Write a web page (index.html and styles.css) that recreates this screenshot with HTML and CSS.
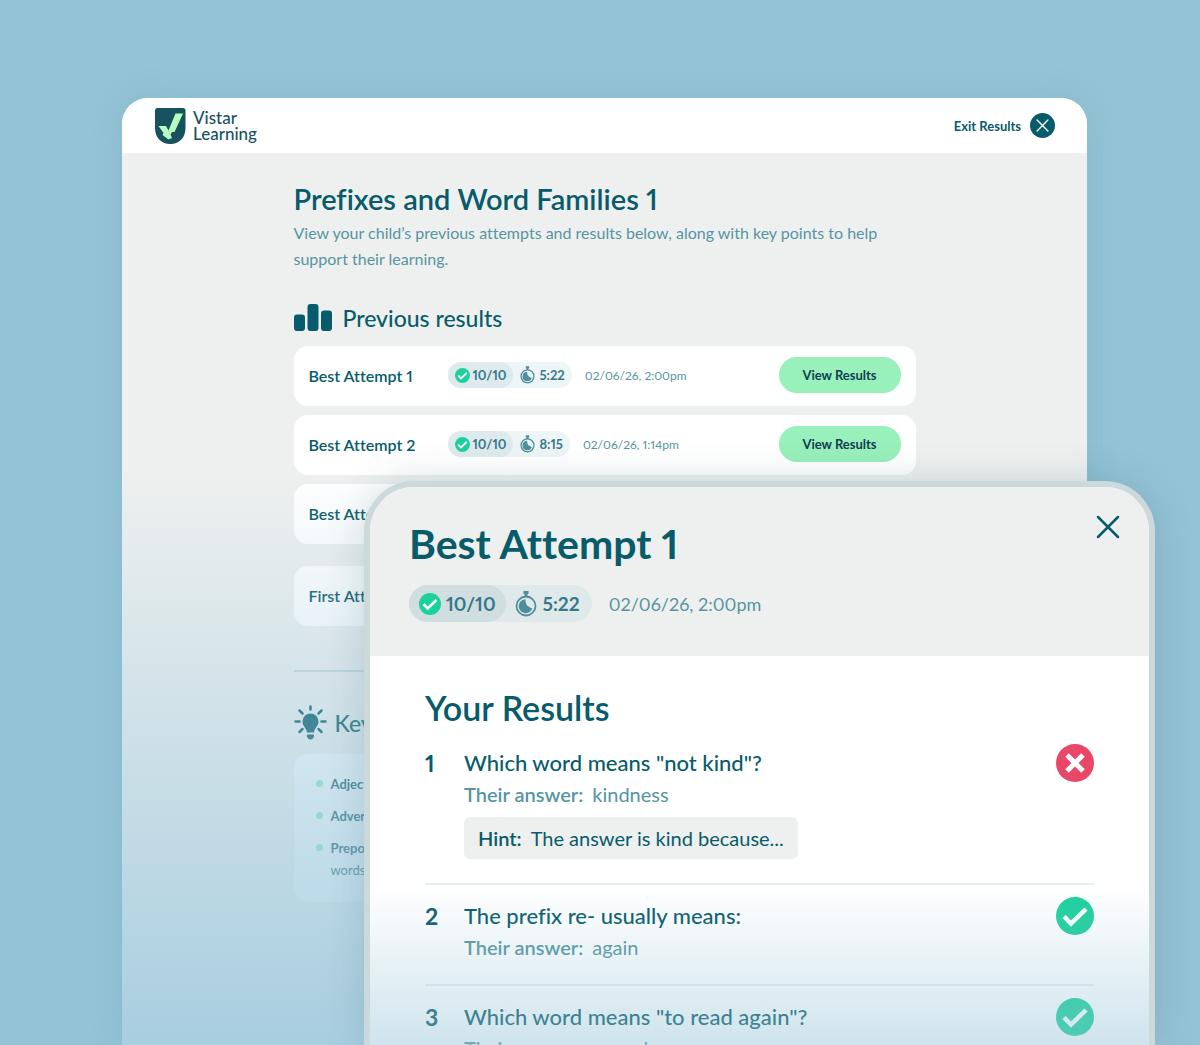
FILE: index.html
```html
<!DOCTYPE html>
<html lang="en">
<head>
  <meta charset="UTF-8">
  <meta name="viewport" content="width=device-width, initial-scale=1.0">
  <title>Vistar Learning - Results</title>
  <link rel="stylesheet" href="styles.css">
</head>
<body>
  <!-- shared icons -->
  <svg class="sprite" aria-hidden="true">
    <symbol id="tick" viewBox="0 0 38 38">
      <circle cx="19" cy="19" r="19" fill="#1dd09d"/>
      <path d="M8 19.500l7 7 15-14.500" fill="none" stroke="#fff" stroke-width="4.500"/>
    </symbol>
    <symbol id="wrong" viewBox="0 0 38 38">
      <circle cx="19" cy="19" r="19" fill="#e84767"/>
      <path d="M11 11l16 16M27 11L11 27" fill="none" stroke="#fff" stroke-width="5"/>
    </symbol>
    <symbol id="timer" viewBox="0 0 22 26">
      <circle cx="11" cy="15" r="9.500" fill="none" stroke="#4f8f9c" stroke-width="1.800"/>
      <path d="M10.500 8.200c0 4.500.5 6.300 6.800 9.300A7 7 0 1 1 10.500 8.200z" fill="#4f8f9c"/>
      <path d="M8.500 1.500h5M11 1.500v4" fill="none" stroke="#4f8f9c" stroke-width="3"/>
    </symbol>
    <symbol id="cross" viewBox="0 0 24 24">
      <path d="M2 2l20 20M22 2L2 22" fill="none" stroke="currentColor" stroke-width="2.500" stroke-linecap="round"/>
    </symbol>
  </svg>

  <div class="window">
    <header class="topbar">
      <a class="logo" href="#">
        <svg class="logo-mark" viewBox="0 0 32 38" aria-hidden="true">
          <path d="M3.500 1h25.500q2.500 0 2.500 2.500V21c0 10-6.500 16-15.250 16S1 31 1 21V3.500Q1 1 3.500 1z" fill="#17525f"/>
          <path d="M4.500 19H12l2.500 4.500L21.500 6.500H29l-8.500 18.500H18l-1.500 2.500 1.500 3.500-3.500 1.500-6-4.500 1-2z" fill="#b9fcc0"/>
        </svg>
        <span class="logo-text">Vistar<br>Learning</span>
      </a>
      <button class="exit" type="button">
        Exit Results
        <span class="exit-icon"><svg viewBox="0 0 24 24"><use href="#cross"/></svg></span>
      </button>
    </header>

    <main class="content">
      <h1>Prefixes and Word Families 1</h1>
      <p class="intro">View your child’s previous attempts and results below, along with key points to help support their learning.</p>

      <h2 class="section-title">
        <svg class="icon-bars" viewBox="0 0 39 28" aria-hidden="true">
          <g fill="#075b6a">
            <rect x="0" y="10.500" width="11" height="16.500" rx="3"/>
            <rect x="13.500" y="0" width="11" height="27" rx="3"/>
            <rect x="27" y="6.500" width="11" height="20.500" rx="3"/>
          </g>
        </svg>
        Previous results
      </h2>

      <ul class="attempts">
        <li class="attempt">
          <span class="attempt-name">Best Attempt 1</span>
          <span class="stats">
            <span class="score"><svg class="stat-tick"><use href="#tick"/></svg>10/10</span>
            <span class="time"><svg class="stat-timer"><use href="#timer"/></svg>5:22</span>
          </span>
          <span class="date">02/06/26, 2:00pm</span>
          <button class="view" type="button">View Results</button>
        </li>
        <li class="attempt">
          <span class="attempt-name">Best Attempt 2</span>
          <span class="stats">
            <span class="score"><svg class="stat-tick"><use href="#tick"/></svg>10/10</span>
            <span class="time"><svg class="stat-timer"><use href="#timer"/></svg>8:15</span>
          </span>
          <span class="date">02/06/26, 1:14pm</span>
          <button class="view" type="button">View Results</button>
        </li>
        <li class="attempt">
          <span class="attempt-name">Best Attempt</span>
        </li>
        <li class="attempt attempt-first">
          <span class="attempt-name">First Attempt</span>
        </li>
      </ul>

      <hr class="divider">

      <h2 class="section-title key-title">
        <svg class="icon-bulb" viewBox="0 0 33 35" aria-hidden="true">
          <g fill="none" stroke="#075b6a" stroke-width="2.500" stroke-linecap="round">
            <path d="M16.500 1.500v3M1.500 16.500h4M27.500 16.500h4M5.500 5.500l3 3M27.500 5.500l-3 3M5.500 27l3-3M27.500 27l-3-3"/>
          </g>
          <path d="M16.500 8.500a8 8 0 0 0-8 8c0 5 4 6 4.500 11h7c.5-5 4.500-6 4.500-11a8 8 0 0 0-8-8z" fill="#075b6a"/>
          <path d="M13 29.500h7v2q-1 3-3.500 3T13 31.500z" fill="#075b6a"/>
        </svg>
        Key
      </h2>
      <ul class="keys">
        <li><strong>Adjectives</strong></li>
        <li><strong>Adverbs</strong></li>
        <li><strong>Prepositions</strong><br>words</li>
      </ul>
    </main>

    <section class="modal" role="dialog" aria-labelledby="modal-title">
      <header class="modal-head">
        <h2 id="modal-title">Best Attempt 1</h2>
        <div class="modal-meta">
          <span class="stats">
            <span class="score"><svg class="stat-tick"><use href="#tick"/></svg>10/10</span>
            <span class="time"><svg class="stat-timer"><use href="#timer"/></svg>5:22</span>
          </span>
          <span class="date">02/06/26, 2:00pm</span>
        </div>
        <button class="close" type="button" aria-label="Close"><svg viewBox="0 0 24 24"><use href="#cross"/></svg></button>
      </header>
      <div class="modal-body">
        <h3>Your Results</h3>
        <ol class="questions">
          <li class="question">
            <span class="number">1</span>
            <div>
              <p class="text">Which word means "not kind"?</p>
              <p class="answer"><b>Their answer:</b>kindness</p>
              <p class="hint"><b>Hint:</b>The answer is kind because...</p>
            </div>
            <svg class="mark"><use href="#wrong"/></svg>
          </li>
          <li class="question">
            <span class="number">2</span>
            <div>
              <p class="text">The prefix re- usually means:</p>
              <p class="answer"><b>Their answer:</b>again</p>
            </div>
            <svg class="mark"><use href="#tick"/></svg>
          </li>
          <li class="question">
            <span class="number">3</span>
            <div>
              <p class="text">Which word means "to read again"?</p>
              <p class="answer"><b>Their answer:</b>reread</p>
            </div>
            <svg class="mark"><use href="#tick"/></svg>
          </li>
        </ol>
      </div>
    </section>
  </div>
</body>
</html>
```
FILE: styles.css
```css
* {
  box-sizing: border-box;
}
body {
  margin: 0;
  height: 100vh;
  overflow: hidden;
  display: flex;
  padding: 98px 113px 0 122px;
  background-color: #95c3d6;
  color: #075b6a;
  font-family: Lato, 'Liberation Sans', sans-serif;
  font-variant-ligatures: none;
  font-variant-numeric: proportional-nums;
}
h1, h2, h3, p, ul, ol {
  margin: 0;
  padding: 0;
}
ul, ol {
  list-style: none;
}
button {
  font-family: inherit;
  border: none;
  cursor: pointer;
}
.sprite {
  position: absolute;
  width: 0;
  height: 0;
}

/* Results page */
.window {
  position: relative;
  flex: 1;
  background-color: #eef0ef;
  border-radius: 26px 26px 0 0;
  box-shadow: 0 0 32px rgba(60, 130, 155, 0.16);
}
/* fades the page into the background */
.window::after {
  content: '';
  position: absolute;
  inset: 372px 0 0;
  background: linear-gradient(rgba(149, 195, 214, 0), rgba(158, 201, 221, 0.88));
  pointer-events: none;
}
.topbar {
  height: 55px;
  padding: 0 32px;
  display: flex;
  justify-content: space-between;
  align-items: center;
  background-color: white;
  border-radius: 26px 26px 0 0;
}
.logo {
  display: flex;
  align-items: center;
  gap: 7px;
  color: #17525f;
  text-decoration: none;
}
.logo-mark {
  width: 32px;
  height: 38px;
}
.logo-text {
  font-size: 17px;
  font-weight: 500;
  line-height: 16px;
}
.exit {
  display: flex;
  align-items: center;
  gap: 9px;
  padding: 0;
  background: none;
  color: #075b6a;
  font-size: 13px;
  font-weight: 700;
}
.exit-icon {
  display: flex;
  align-items: center;
  justify-content: center;
  width: 25px;
  height: 25px;
  border-radius: 50%;
  background-color: #075b6a;
  color: white;
}
.exit-icon svg {
  width: 13px;
  height: 13px;
}
.content {
  max-width: 622px;
  margin: 0 auto;
  padding-top: 27px;
}
h1 {
  font-size: 29px;
  font-weight: 600;
  line-height: 38px;
}
.intro {
  margin-top: 2px;
  font-size: 16px;
  line-height: 26px;
  color: #5695a2;
}
.section-title {
  display: flex;
  align-items: center;
  gap: 10px;
  height: 28px;
  margin: 32px 0 14px;
  font-size: 23px;
  font-weight: 500;
}
.icon-bars {
  width: 39px;
  height: 28px;
}
.attempts {
  display: flex;
  flex-direction: column;
  gap: 9px;
}
.attempt {
  display: flex;
  align-items: center;
  height: 60px;
  padding: 0 15px 2px;
  background-color: white;
  border-radius: 14px;
}
.attempt-first {
  margin-top: 13px;
}
.attempt-name {
  width: 139px;
  font-size: 16px;
  font-weight: 600;
}
.stats {
  display: flex;
  height: 26px;
  border-radius: 19px;
  background-color: #edf5f7;
  color: #35788a;
  font-size: 13px;
  font-weight: 700;
}
.score, .time {
  display: flex;
  align-items: center;
  gap: 3px;
  padding: 0 7px;
}
.score {
  border-radius: 19px;
  background-color: #deeaee;
}
.stat-tick {
  width: 15px;
  height: 15px;
}
.stat-timer {
  width: 15px;
  height: 18px;
}
.time {
  gap: 4px;
}
.date {
  margin-left: 13px;
  font-size: 12px;
  color: #5695a2;
}
.view {
  width: 122px;
  height: 36px;
  margin-left: auto;
  border-radius: 18px;
  background-color: #98f0bb;
  color: #123f52;
  font-size: 13px;
  font-weight: 700;
}
.divider {
  height: 2px;
  margin: 44px 0 0;
  border: none;
  background-color: #c9d8db;
}
.key-title {
  height: 35px;
  margin-top: 33px;
  gap: 8px;
}
.icon-bulb {
  width: 33px;
  height: 35px;
}
.keys {
  padding: 19px 37px 11px;
  border-radius: 14px;
  background-color: #f7fbfe;
  font-size: 13px;
  line-height: 22px;
}
.keys li {
  position: relative;
  margin-bottom: 10px;
}
.keys li::before {
  content: '';
  position: absolute;
  left: -15px;
  top: 7px;
  width: 7px;
  height: 7px;
  border-radius: 50%;
  background-color: #86efb2;
}

/* Attempt dialog */
.modal {
  position: absolute;
  z-index: 1;
  inset: 383px -68px 0 242px;
  overflow: hidden;
  border: 6px solid #cbd9db;
  border-bottom: none;
  border-radius: 50px 50px 0 0;
  background-color: white;
  box-shadow: 0 0 40px rgba(0, 60, 75, 0.16);
}
.modal::after {
  content: '';
  position: absolute;
  inset: auto 0 0;
  height: 160px;
  background: linear-gradient(rgba(149, 195, 214, 0), rgba(149, 195, 214, 0.45));
  pointer-events: none;
}
.modal-head {
  position: relative;
  padding: 31px 39px 34px;
  background-color: #eef0ef;
}
.modal-head h2 {
  font-size: 41px;
  font-weight: 700;
  line-height: 52px;
}
.modal-meta {
  display: flex;
  align-items: center;
  margin-top: 15px;
}
.modal-meta .stats {
  height: 37px;
  background-color: #e0e9ea;
  font-size: 19px;
}
.modal-meta .score {
  gap: 5px;
  padding: 0 10px;
  background-color: #d0dee0;
}
.modal-meta .time {
  gap: 6px;
  padding: 0 12px 0 9px;
}
.modal-meta .stat-tick {
  width: 22px;
  height: 22px;
}
.modal-meta .stat-timer {
  width: 22px;
  height: 26px;
}
.modal-meta .date {
  margin-left: 17px;
  font-size: 18px;
}
.close {
  position: absolute;
  top: 28px;
  right: 29px;
  padding: 0;
  background: none;
  color: #075b6a;
}
.close svg {
  display: block;
  width: 24px;
  height: 24px;
}
.modal-body {
  padding: 29px 55px;
}
.modal-body h3 {
  margin-bottom: 1px;
  font-size: 34px;
  font-weight: 600;
  line-height: 46px;
}
.question {
  display: grid;
  grid-template-columns: 39px 1fr 38px;
  align-items: start;
  padding: 12px 0 24px;
  border-bottom: 2px solid #e6eeee;
}
.number {
  font-size: 23px;
  font-weight: 700;
  line-height: 38px;
}
.text {
  font-size: 22px;
  font-weight: 500;
  line-height: 37px;
}
.answer {
  font-size: 20px;
  line-height: 26px;
  color: #5695a2;
}
.answer b, .hint b {
  margin-right: 9px;
  font-weight: 600;
}
.hint {
  width: fit-content;
  margin-top: 10px;
  padding: 0 14px;
  border-radius: 6px;
  background-color: #eef0ef;
  font-size: 20px;
  line-height: 42px;
}
.mark {
  width: 38px;
  height: 38px;
}
```
